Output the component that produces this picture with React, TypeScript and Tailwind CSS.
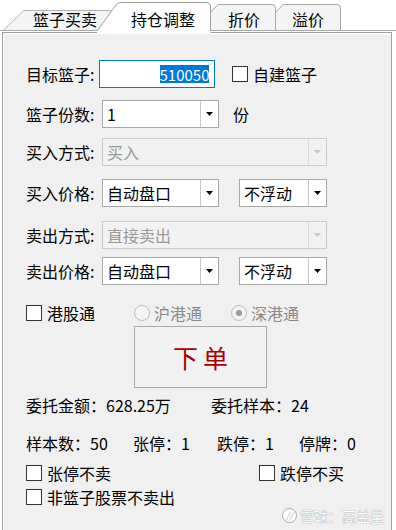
import React from "react";

const FONT = { fontFamily: '"Noto Sans CJK SC", "Noto Sans", sans-serif' };

function Arrow({ disabled }: { disabled?: boolean }) {
  return (
    <svg width="7" height="4" viewBox="0 0 7 4">
      <path d="M0 0H7L3.5 4Z" fill={disabled ? "#c8c8c8" : "#000"} />
    </svg>
  );
}

function Combo({ w, text, disabled }: { w: string; text: string; disabled?: boolean }) {
  return (
    <div
      className={`flex h-[28px] ${w} border ${
        disabled ? "border-[#cccccc] bg-[#f2f2f2]" : "border-[#a8a8a8] bg-white"
      }`}
    >
      <div
        className={`flex flex-1 items-center pl-[4px] text-[16px] leading-none ${
          disabled ? "text-[#9a9a9a]" : "text-black"
        }`}
      >
        {text}
      </div>
      <div
        className={`flex w-[18px] items-center justify-center border-l ${
          disabled ? "border-[#dcdcdc]" : "border-[#c8c8c8]"
        }`}
      >
        <Arrow disabled={disabled} />
      </div>
    </div>
  );
}

function Check({ label, className = "" }: { label: string; className?: string }) {
  return (
    <div className={`flex items-center ${className}`}>
      <div className="h-[16px] w-[16px] border border-[#333333] bg-white" />
      <span className="ml-[5px] text-[16px] leading-none text-black">{label}</span>
    </div>
  );
}

function Radio({ label, checked, className = "" }: { label: string; checked?: boolean; className?: string }) {
  return (
    <div className={`flex items-center ${className}`}>
      <div className="flex h-[16px] w-[16px] items-center justify-center rounded-full border border-[#bcbcbc] bg-[#f4f4f4]">
        {checked && <div className="h-[6px] w-[6px] rounded-full bg-[#9a9a9a]" />}
      </div>
      <span className="ml-[4px] text-[16px] leading-none text-[#8a8a8a]">{label}</span>
    </div>
  );
}

function Label({ children, w = "w-[76px]" }: { children: React.ReactNode; w?: string }) {
  return <div className={`${w} shrink-0 text-[16px] leading-none text-black`}>{children}</div>;
}

function TabStrip() {
  return (
    <div className="relative h-[31px] w-[396px]">
      <svg className="absolute inset-0" width="396" height="33" viewBox="0 0 396 33">
        <path d="M3 30.5 L24 10.5 L112 10.5 L102 30.5 Z" fill="#f4f4f4" />
        <path d="M3 30.5 L24 10.5 L112 10.5" fill="none" stroke="#b4b4b4" strokeWidth="1" />
        <path d="M211 30.5 L211 11 L218 4.5 L272 4.5 Q275.5 4.5 275.5 8 L275.5 30.5 Z" fill="#f4f4f4" />
        <path d="M211 12 L218 4.5 L272 4.5 Q275.5 4.5 275.5 8 L275.5 30.5" fill="none" stroke="#a8a8a8" />
        <path d="M276 30.5 L276 12 L283 4.5 L337 4.5 Q340.5 4.5 340.5 8 L340.5 30.5 Z" fill="#f4f4f4" />
        <path d="M276 12 L283 4.5 L337 4.5 Q340.5 4.5 340.5 8 L340.5 30.5" fill="none" stroke="#a8a8a8" />
        <path d="M97 31 L116 5 Q118 2.5 121 2.5 L206 2.5 Q210.5 2.5 210.5 7 L210.5 33 L97 33 Z" fill="#ffffff" />
        <path d="M97 31 L116 5 Q118 2.5 121 2.5 L206 2.5 Q210.5 2.5 210.5 7 L210.5 31" fill="none" stroke="#a0a0a0" />
        <path d="M0 30.5 H98" stroke="#a8a8a8" />
        <path d="M210.5 30.5 H396" stroke="#a8a8a8" />
      </svg>
      <div className="relative flex h-[31px] items-start pt-[10px] text-[16px] leading-[18px] text-black">
        <div className="ml-[20px] w-[90px] text-center">篮子买卖</div>
        <div className="ml-[7px] w-[92px] text-center">持仓调整</div>
        <div className="ml-[3px] w-[64px] text-center">折价</div>
        <div className="ml-[1px] w-[62px] text-center">溢价</div>
      </div>
    </div>
  );
}

export default function App() {
  return (
    <div className="relative h-[530px] w-[396px] overflow-hidden bg-white" style={FONT}>
      <TabStrip />
      <div className="ml-[2px] mt-[1px] h-[510px] w-[390px] border border-[#a0a0a0] bg-[#f0f0f0] pl-[23px] shadow-[inset_1px_1px_0_#ffffff]">
        <div className="mt-[27px] flex h-[28px] items-center">
          <Label w="w-[73px]">目标篮子:</Label>
          <div className="flex h-[28px] w-[116px] items-center justify-end border border-[#0078d7] bg-white pr-[5px]">
            <span className="flex h-[18px] w-[49px] items-center justify-center bg-[#0078d7] text-[15px] leading-none text-white">
              510050
            </span>
          </div>
          <Check label="自建篮子" className="ml-[17px]" />
        </div>
        <div className="mt-[12px] flex h-[28px] items-center">
          <Label>篮子份数:</Label>
          <Combo w="w-[117px]" text="1" />
          <span className="ml-[14px] text-[16px] leading-none">份</span>
        </div>
        <div className="mt-[10px] flex h-[28px] items-center">
          <Label>买入方式:</Label>
          <Combo w="w-[225px]" text="买入" disabled />
        </div>
        <div className="mt-[13px] flex h-[28px] items-center">
          <Label>买入价格:</Label>
          <Combo w="w-[117px]" text="自动盘口" />
          <div className="ml-[20px]">
            <Combo w="w-[88px]" text="不浮动" />
          </div>
        </div>
        <div className="mt-[14px] flex h-[28px] items-center">
          <Label>卖出方式:</Label>
          <Combo w="w-[225px]" text="直接卖出" disabled />
        </div>
        <div className="mt-[8px] flex h-[28px] items-center">
          <Label>卖出价格:</Label>
          <Combo w="w-[117px]" text="自动盘口" />
          <div className="ml-[20px]">
            <Combo w="w-[88px]" text="不浮动" />
          </div>
        </div>
        <div className="mt-[18px] flex h-[20px] items-center">
          <Check label="港股通" />
          <Radio label="沪港通" className="ml-[39px]" />
          <Radio label="深港通" checked className="ml-[29px]" />
        </div>
        <div className="ml-[108px] mt-[3px] flex h-[62px] w-[133px] items-center justify-center border border-[#a8a8a8] bg-[#f2f2f2]">
          <span className="pl-[5px] text-[25px] leading-none tracking-[5px] text-[#a80000]">下单</span>
        </div>
        <div className="mt-[7px] flex h-[20px] items-center text-[16px] leading-none text-black">
          <div className="w-[185px]">委托金额：628.25万</div>
          <div>委托样本：24</div>
        </div>
        <div className="mt-[18px] flex h-[20px] items-center text-[16px] leading-none text-black">
          <div className="w-[107px]">样本数：50</div>
          <div className="w-[84px]">张停：1</div>
          <div className="w-[82px]">跌停：1</div>
          <div>停牌：0</div>
        </div>
        <div className="mt-[10px] flex h-[20px] items-center">
          <Check label="张停不卖" className="w-[233px]" />
          <Check label="跌停不买" />
        </div>
        <div className="mt-[4px] flex h-[20px] items-center">
          <Check label="非篮子股票不卖出" />
        </div>
      </div>
      <div className="absolute bottom-[7px] right-[12px] flex items-center gap-[3px] text-[14px] leading-none text-white [text-shadow:0_0_1px_#9a9a9a,0_0_1px_#9a9a9a]">
        <div className="flex h-[15px] w-[15px] items-center justify-center rounded-full border border-[#a8a8a8] bg-white text-[9px] italic text-[#a8a8a8] [text-shadow:none]">
          //
        </div>
        <span>雪球：高益量</span>
      </div>
    </div>
  );
}
